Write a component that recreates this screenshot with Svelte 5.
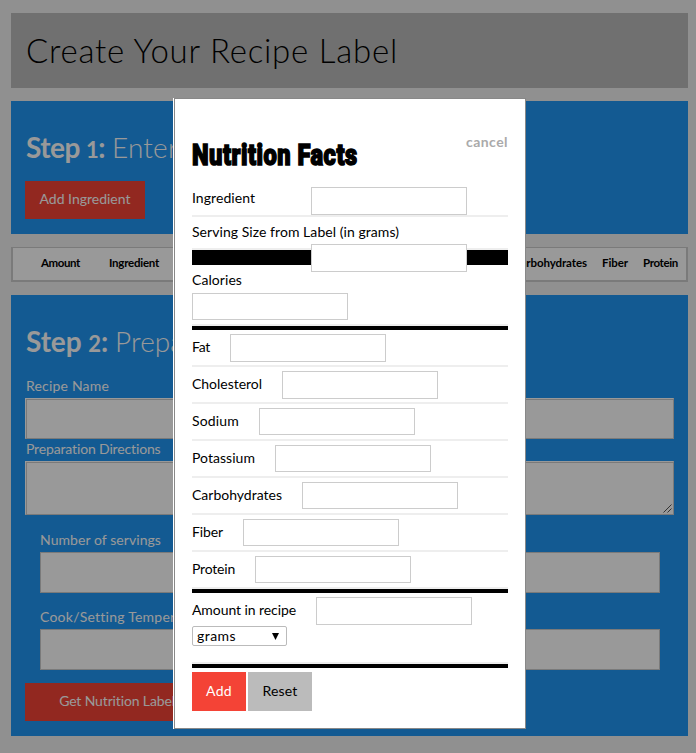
<script>
  // Spreads the letters of a text so that its line takes a given width.
  function fit(node, width) {
    node.style.letterSpacing = '0px';
    const natural = node.getBoundingClientRect().width;
    node.style.letterSpacing = (width - natural) / node.textContent.length + 'px';
  }

  const columns = [
    { name: 'Amount', start: 28, width: 39 },
    { name: 'Ingredient', start: 29, width: 50 },
    { name: 'Calories', start: 38, width: 42 },
    { name: 'Fat', start: 20, width: 16 },
    { name: 'Cholesterol', start: 22, width: 58 },
    { name: 'Sodium', start: 22, width: 38 },
    { name: 'Potassium', start: 17, width: 52 },
    { name: 'Carbohydrates', start: 29, width: 74 },
    { name: 'Fiber', start: 15, width: 26 },
    { name: 'Protein', start: 15, width: 35 }
  ];

  const nutrients = [
    { name: 'Fat', width: 18 },
    { name: 'Cholesterol', width: 70 },
    { name: 'Sodium', width: 47 },
    { name: 'Potassium', width: 63 },
    { name: 'Carbohydrates', width: 90 },
    { name: 'Fiber', width: 31 },
    { name: 'Protein', width: 43 }
  ];
</script>

<div class="page">
  <header><h1><span use:fit={372}>Create Your Recipe Label</span></h1></header>

  <section class="one">
    <h2><b use:fit={79}>Step <i>1</i>:</b><span class="rest" use:fit={66}>Enter</span></h2>
    <button class="red"><span use:fit={91}>Add Ingredient</span></button>
  </section>

  <div class="table">
    {#each columns as c}
      <span class="col" style="margin-left: {c.start}px; width: {c.width}px"><span use:fit={c.width}>{c.name}</span></span>
    {/each}
  </div>

  <section class="two">
    <h2><b use:fit={82}>Step <i>2</i>:</b><span class="rest" use:fit={69}>Prepa</span></h2>
    <label class="lab"><span use:fit={83}>Recipe Name</span></label>
    <div class="box"></div>
    <label class="lab second"><span use:fit={135}>Preparation Directions</span></label>
    <div class="box area">
      <svg width="9" height="9" viewBox="0 0 9 9"><path d="M0.5 8.5L8.5 0.5M4.5 8.5L8.5 4.5" stroke="#555" stroke-width="1" /></svg>
    </div>
    <div class="inner">
      <label class="lab"><span use:fit={121}>Number of servings</span></label>
      <div class="box"></div>
      <label class="lab cook"><span use:fit={135}>Cook/Setting Temper</span></label>
      <div class="box"></div>
    </div>
    <button class="red get"><span use:fit={116}>Get Nutrition Label</span></button>
  </section>
</div>

<div class="overlay">
  <div class="modal">
    <div class="top">
      <h3>Nutrition Facts</h3>
      <a class="cancel"><span use:fit={42}>cancel</span></a>
    </div>
    <div class="row ingredient">
      <label><span use:fit={63}>Ingredient</span></label>
      <div class="field"></div>
    </div>
    <div class="row serving">
      <label><span use:fit={207}>Serving Size from Label (in grams)</span></label>
      <div class="field"></div>
    </div>
    <div class="bar thick"></div>
    <div class="row calories">
      <label><span use:fit={50}>Calories</span></label>
      <div class="field short"></div>
    </div>
    <div class="bar"></div>
    {#each nutrients as n, i}
      <div class="row nutrient">
        <label style="width: {n.width}px"><span use:fit={n.width}>{n.name}</span></label>
        <div class="field" class:short={i >= 2}></div>
      </div>
    {/each}
    <div class="bar"></div>
    <div class="row amount">
      <div class="line">
        <label style="width: 104px"><span use:fit={104}>Amount in recipe</span></label>
        <div class="field"></div>
      </div>
      <div class="select"><span use:fit={39}>grams</span>
        <svg width="7" height="7" viewBox="0 0 7 7"><path d="M0 0H7L3.5 7Z" fill="#000" /></svg>
      </div>
    </div>
    <div class="bar"></div>
    <div class="buttons">
      <button class="red"><span use:fit={26}>Add</span></button>
      <button class="reset"><span use:fit={35}>Reset</span></button>
    </div>
  </div>
</div>

<style>
  :global(body) { background: #f1f1f1; overflow: hidden; }
  :global(#app) { height: 753px; position: relative; overflow: hidden; }
  .page, .overlay {
    font-family: Lato, "Open Sans", "Liberation Sans", sans-serif;
    font-size: 14px;
    box-sizing: border-box;
    white-space: nowrap;
  }
  .page :global(*), .overlay :global(*) { box-sizing: border-box; }
  .page { padding: 13px 8px 0 11px; height: 753px; }
  h1, h2, h3 { margin: 0; font-weight: 300; }
  header { height: 75px; padding: 0 15px; background: #bbb; }
  h1 { font-size: 33px; line-height: 75px; }
  section { background: #2196f3; color: #fff; margin-top: 13px; padding: 0 14px; overflow: hidden; }
  .one { height: 133px; }
  .two { height: 441px; }
  h2 { font-size: 28px; line-height: 36px; height: 65px; padding: 28px 0 0 1px; display: flex; }
  h2 b { font-weight: 700; }
  h2 i { font-style: normal; font-size: 22px; }
  .rest { margin-left: 7px; }
  button {
    display: block; border: 0; padding: 0 0 2px; font: inherit; text-align: center;
  }
  .red { background: #f44336; color: #fff; }
  .one .red { width: 120px; height: 38px; margin-top: 15px; padding-bottom: 3px; }
  .table {
    margin-top: 13px; height: 35px; background: #fff; border: 2px solid #ccc; border-top-width: 1px;
    display: flex; line-height: 30px; font-size: 11.5px; font-weight: 700; overflow: hidden;
  }
  .col { flex: none; }
  .lab { display: block; height: 17px; line-height: 15px; }
  .two > .lab { margin-top: 18px; padding-left: 1px; }
  .two > .lab.second { margin-top: 2px; }
  .box { margin-top: 4px; height: 41px; background: #fff; border: 1px solid #ccc; }
  .two > .box { border-color: #fff #ccc #ccc #fff; box-shadow: inset 1px 1px 0 #ccc; }
  .two > .lab + .box { margin-top: 3px; }
  .area { display: flex; justify-content: flex-end; align-items: flex-end; padding: 0 1px 1px 0; }
  .two > .area { height: 54px; }
  .inner { padding: 17px 14px 0 15px; }
  .inner .cook { margin-top: 16px; }
  .inner .lab + .box { margin-top: 3px; }
  .get { width: 184px; height: 38px; margin-top: 13px; padding-bottom: 3px; }

  .overlay {
    position: absolute; inset: 0; background: rgba(0, 0, 0, 0.4);
    padding: 98px 170px 0 174px; color: #000;
  }
  .modal {
    height: 631px; background: #fff; border: 1px solid #888;
    box-shadow: -1px 0 0 #fff; padding: 0 17px;
  }
  .top { height: 88px; display: flex; justify-content: space-between; }
  h3 {
    font-family: Roboto, "Liberation Sans", sans-serif; font-weight: 900; font-size: 29px;
    line-height: 36px; margin-top: 38px; width: 166px; letter-spacing: 0.6px;
    transform: scaleX(0.815); transform-origin: 0 0; -webkit-text-stroke: 1.5px #000;
  }
  .cancel { color: #aaa; font-weight: 700; line-height: 18px; margin-top: 34px; }
  .row { border-bottom: 2px solid #eee; }
  .row label { display: block; height: 18px; line-height: 18px; flex: none; }
  .field { width: 156px; height: 28px; border: 1px solid #ccc; background: #fff; flex: none; }
  .short { height: 27px; }
  .ingredient { height: 30px; display: flex; justify-content: space-between; padding-right: 41px; }
  .ingredient label { margin-top: 2px; }
  .serving { height: 33px; padding-top: 6px; }
  .serving .field { position: relative; margin: 3px 0 0 119px; }
  .bar { height: 4px; background: #000; }
  .thick { height: 15px; }
  .calories { height: 61px; padding-top: 6px; }
  .calories .field { margin-top: 4px; }
  .nutrient { height: 37px; padding-top: 4px; display: flex; gap: 20px; }
  .nutrient label { margin-top: 4px; }
  .amount { height: 71px; padding-top: 4px; }
  .line { display: flex; gap: 20px; }
  .line label { margin-top: 4px; }
  .select {
    width: 95px; height: 20px; margin-top: 1px; border: 1px solid #bbb; border-radius: 2px;
    display: flex; justify-content: space-between; align-items: center; padding: 0 7px 0 4px; line-height: 18px;
  }
  .buttons { display: flex; gap: 2px; padding-top: 4px; }
  .buttons button { height: 39px; width: 54px; }
  .buttons .reset { width: 64px; background: #bbb; color: #000; }
</style>
